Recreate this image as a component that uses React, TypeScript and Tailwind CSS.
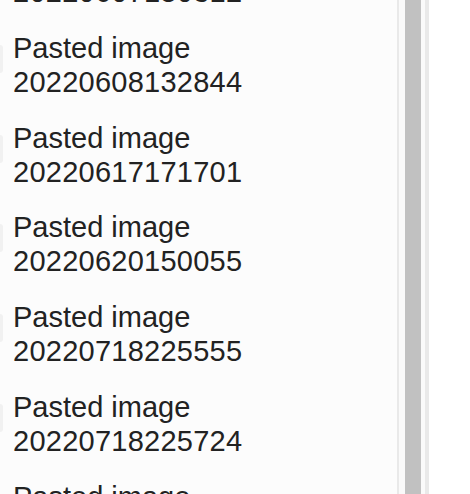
const items = [
  "20220607150312",
  "20220608132844",
  "20220617171701",
  "20220620150055",
  "20220718225555",
  "20220718225724",
  "20220719103410",
];

export default function App() {
  return (
    <div className="flex h-[494px] w-[470px] overflow-hidden bg-white">
      {/* File list */}
      <div className="w-[397px] shrink-0 overflow-hidden bg-[#fcfcfc]">
        <ul className="-mt-[70px] flex flex-col">
          {items.map((id) => (
            <li key={id} className="flex h-[89.75px] items-start pt-[11px]">
              <div className="mt-[14px] h-[28px] w-[3px] shrink-0 rounded-r-[3px] bg-[#f1f1f1]" />
              <div
                className="ml-[10px] text-[29px] leading-[34px] text-[#222222]"
                style={{ fontFamily: '"Liberation Sans", Arial, sans-serif' }}
              >
                <div>Pasted image</div>
                <div className="tracking-[0.25px]">{id}</div>
              </div>
            </li>
          ))}
        </ul>
      </div>

      {/* Scrollbar */}
      <div className="flex w-[32px] shrink-0 border-r-[4px] border-l-[2px] border-[#e9e9e9] bg-[#fafafa]">
        <div className="ml-[6px] h-full w-[16px] bg-[#c1c1c1]" />
      </div>

      <div className="flex-1 bg-white" />
    </div>
  );
}
